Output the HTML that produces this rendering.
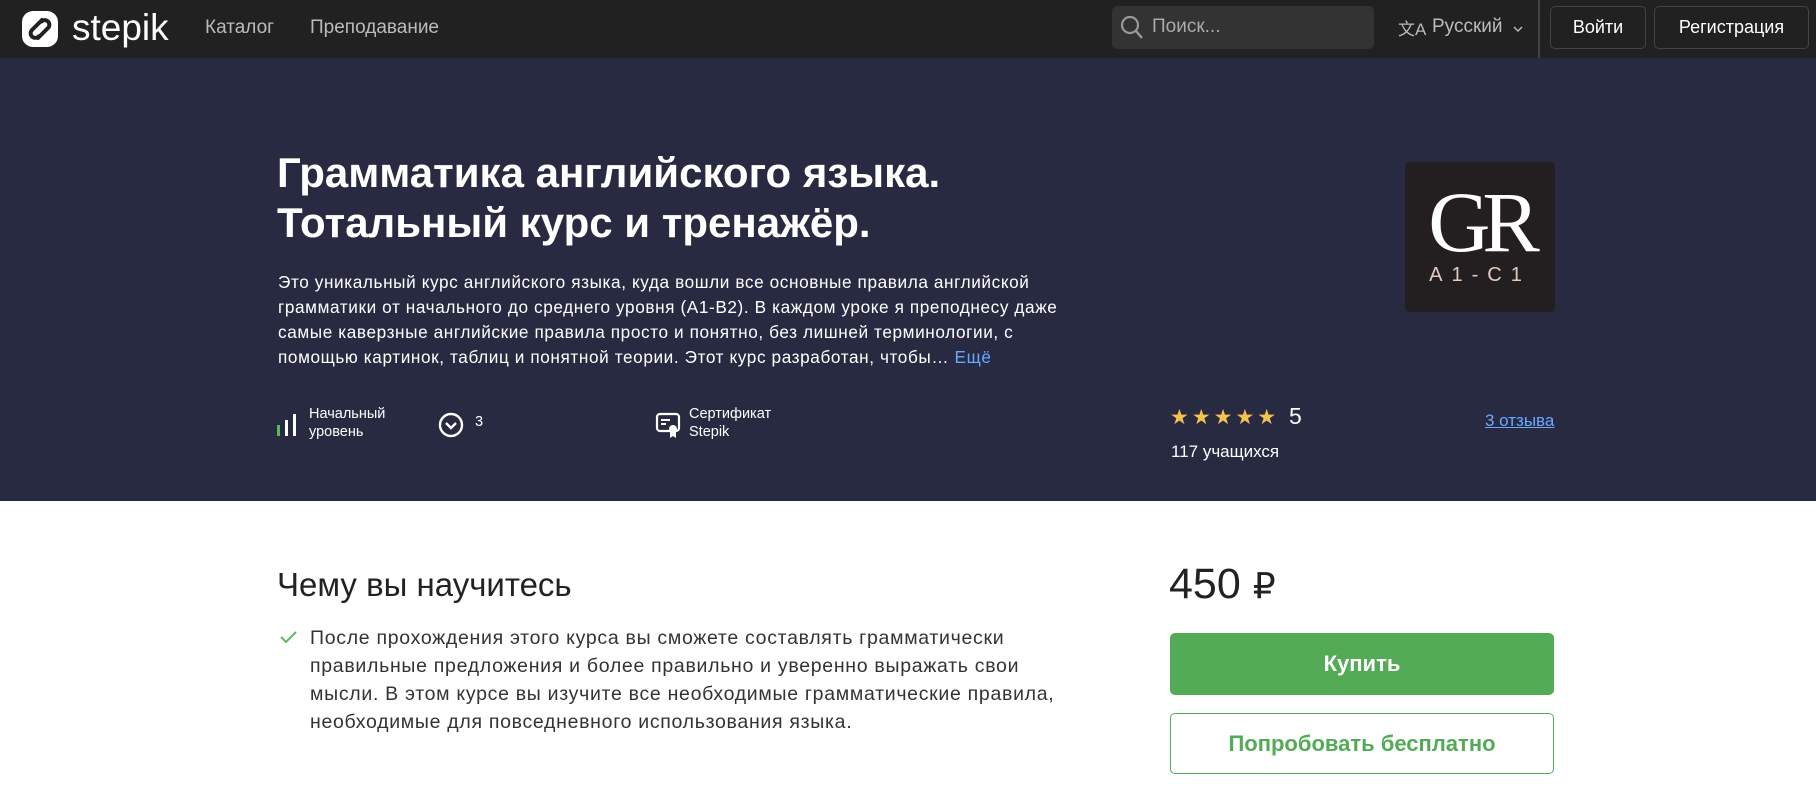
<!DOCTYPE html>
<html><head><meta charset="utf-8"><style>
*{box-sizing:border-box;margin:0;padding:0}
body{width:1816px;height:791px;overflow:hidden;font-family:"Liberation Sans","DejaVu Sans",sans-serif;background:#fff;position:relative}
.nav{position:absolute;left:0;top:0;width:1816px;height:58px;background:#212121;color:#bbb}
.a{position:absolute}
.hero{position:absolute;left:0;top:58px;width:1816px;height:443px;background:#282a42;color:#fff}
.btn{position:absolute;top:6px;height:43px;border:1px solid #444;border-radius:5px;color:#fff;font-size:18px;display:flex;align-items:center;justify-content:center}
</style></head><body>
<div class="nav">
  <svg class="a" style="left:20px;top:9px" width="40" height="40" viewBox="0 0 40 40"><rect x="2" y="2" width="36" height="36" rx="11" fill="#fff"/><path d="M22 11 L12 21 a4.5 4.5 0 0 0 6.5 6.5 M18 29 L28 19 a4.5 4.5 0 0 0 -6.5 -6.5" stroke="#212121" stroke-width="4" fill="none" stroke-linecap="round"/></svg>
  <div class="a" style="left:72px;top:7px;font-size:37px;color:#fff">stepik</div>
  <div class="a" style="left:205px;top:17px;font-size:19px">Каталог</div>
  <div class="a" style="left:310px;top:17px;font-size:19px">Преподавание</div>
  <div class="a" style="left:1112px;top:6px;width:262px;height:43px;background:#333;border-radius:5px"></div>
  <svg class="a" style="left:1119px;top:14px" width="26" height="28" viewBox="0 0 26 28"><circle cx="11" cy="11" r="8" stroke="#999" stroke-width="2.2" fill="none"/><path d="M17 17 L23 24" stroke="#999" stroke-width="2.4"/></svg>
  <div class="a" style="left:1152px;top:16px;font-size:19px;color:#aaa">Поиск...</div>
  <div class="a" style="left:1398px;top:15px;font-size:17px;color:#bbb">文A</div>
  <div class="a" style="left:1432px;top:16px;font-size:19px;color:#bbb">Русский</div>
  <svg class="a" style="left:1513px;top:25px" width="10" height="8"><path d="M1 2 L5 6 L9 2" stroke="#bbb" stroke-width="1.5" fill="none"/></svg>
  <div class="a" style="left:1538px;top:0;width:2px;height:58px;background:#444"></div>
  <div class="btn" style="left:1550px;width:96px">Войти</div>
  <div class="btn" style="left:1654px;width:155px">Регистрация</div>
</div>
<div class="hero">
  <div class="a" style="left:277px;top:90px;font-size:42px;font-weight:bold;line-height:50px">Грамматика английского языка.<br>Тотальный курс и тренажёр.</div>
  <div class="a" style="left:278px;top:212px;width:805px;font-size:17.2px;line-height:25px;letter-spacing:0.6px">Это уникальный курс английского языка, куда вошли все основные правила английской грамматики от начального до среднего уровня (A1-B2). В каждом уроке я преподнесу даже самые каверзные английские правила просто и понятно, без лишней терминологии, с помощью картинок, таблиц и понятной теории. Этот курс разработан, чтобы… <span style="color:#6aa8ff">Ещё</span></div>
  <div class="a" style="left:1405px;top:104px;width:150px;height:150px;background:#231f20;border-radius:4px;color:#fff">
    <div class="a" style="left:0;width:150px;top:10px;text-align:center;font-family:'Liberation Serif',serif;font-size:86px;letter-spacing:-8px">GR</div>
    <div class="a" style="left:0;width:150px;top:102px;text-align:center;font-size:20px;letter-spacing:9px;color:#e3c9c0">A1-C1</div>
  </div>
  <svg class="a" style="left:276px;top:354px" width="22" height="26"><rect x="1" y="13" width="3" height="11" fill="#5cb85c"/><rect x="9" y="8" width="3" height="16" fill="#fff"/><rect x="17" y="2" width="3" height="22" fill="#fff"/></svg>
  <div class="a" style="left:309px;top:347px;font-size:14.5px;line-height:18px">Начальный<br>уровень</div>
  <svg class="a" style="left:438px;top:354px" width="26" height="26"><circle cx="13" cy="13" r="11" stroke="#fff" stroke-width="2.4" fill="none"/><path d="M8 11 L13 16 L18 11" stroke="#fff" stroke-width="2.4" fill="none"/></svg>
  <div class="a" style="left:475px;top:356px;font-size:14.5px">3</div>
  <svg class="a" style="left:655px;top:353px" width="26" height="28"><rect x="2" y="3" width="22" height="17" rx="3" stroke="#fff" stroke-width="2.2" fill="none"/><path d="M6 9h9M6 13h5" stroke="#fff" stroke-width="2"/><circle cx="18" cy="18" r="4" fill="#fff"/><path d="M15 21v6l3-2 3 2v-6" fill="#fff"/></svg>
  <div class="a" style="left:689px;top:347px;font-size:14.5px;line-height:18px">Сертификат<br>Stepik</div>
  <div class="a" style="left:1170px;top:347px;font-size:21px;color:#f5c24b;letter-spacing:3px">★★★★★</div>
  <div class="a" style="left:1289px;top:345px;font-size:23px">5</div>
  <div class="a" style="left:1171px;top:384px;font-size:17px">117 учащихся</div>
  <div class="a" style="left:1485px;top:353px;font-size:17px;color:#6aa8ff;text-decoration:underline">3 отзыва</div>
</div>
<div class="a" style="left:277px;top:566px;font-size:33px;color:#222">Чему вы научитесь</div>
<svg class="a" style="left:279px;top:629px" width="20" height="16"><path d="M2 8 L7 13 L17 3" stroke="#5cb85c" stroke-width="2" fill="none"/></svg>
<div class="a" style="left:310px;top:624px;width:770px;font-size:19.5px;line-height:28px;color:#333;letter-spacing:0.7px">После прохождения этого курса вы сможете составлять грамматически правильные предложения и более правильно и уверенно выражать свои мысли. В этом курсе вы изучите все необходимые грамматические правила, необходимые для повседневного использования языка.</div>
<div class="a" style="left:1169px;top:560px;font-size:43px;color:#222">450 <span style="font-size:36px">₽</span></div>
<div class="a" style="left:1170px;top:633px;width:384px;height:62px;background:#54ab56;border-radius:5px;color:#fff;font-size:22px;font-weight:bold;display:flex;align-items:center;justify-content:center">Купить</div>
<div class="a" style="left:1170px;top:713px;width:384px;height:61px;border:1.5px solid #54ab56;border-radius:5px;color:#54ab56;font-size:22px;font-weight:bold;display:flex;align-items:center;justify-content:center">Попробовать бесплатно</div>
</body></html>
